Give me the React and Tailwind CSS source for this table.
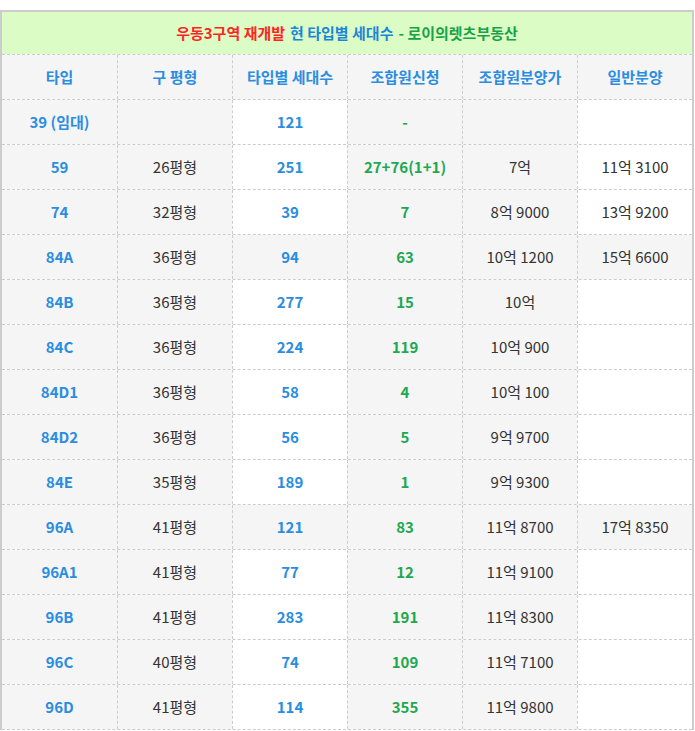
const headers = ["타입", "구 평형", "타입별 세대수", "조합원신청", "조합원분양가", "일반분양"];

const rows = [
  { type: "39 (임대)", old: "", count: "121", apply: "-", price: "", general: "" },
  { type: "59", old: "26평형", count: "251", apply: "27+76(1+1)", price: "7억", general: "11억 3100" },
  { type: "74", old: "32평형", count: "39", apply: "7", price: "8억 9000", general: "13억 9200" },
  { type: "84A", old: "36평형", count: "94", apply: "63", price: "10억 1200", general: "15억 6600", shade: true },
  { type: "84B", old: "36평형", count: "277", apply: "15", price: "10억", general: "" },
  { type: "84C", old: "36평형", count: "224", apply: "119", price: "10억 900", general: "" },
  { type: "84D1", old: "36평형", count: "58", apply: "4", price: "10억 100", general: "" },
  { type: "84D2", old: "36평형", count: "56", apply: "5", price: "9억 9700", general: "" },
  { type: "84E", old: "35평형", count: "189", apply: "1", price: "9억 9300", general: "" },
  { type: "96A", old: "41평형", count: "121", apply: "83", price: "11억 8700", general: "17억 8350", shade: true },
  { type: "96A1", old: "41평형", count: "77", apply: "12", price: "11억 9100", general: "" },
  { type: "96B", old: "41평형", count: "283", apply: "191", price: "11억 8300", general: "" },
  { type: "96C", old: "40평형", count: "74", apply: "109", price: "11억 7100", general: "" },
  { type: "96D", old: "41평형", count: "114", apply: "355", price: "11억 9800", general: "" },
];

const font = { fontFamily: '"Noto Sans CJK KR", "Noto Sans", sans-serif' };

function Cell({ children, bg, color, first, strong }) {
  return (
    <div
      className={`flex items-center justify-center h-[44px] text-[15px] ${strong ? "font-semibold" : ""} ${bg} ${color} ${
        first ? "" : "border-l border-dashed border-[#cccccc]"
      }`}
    >
      {children}
    </div>
  );
}

export default function App() {
  return (
    <div className="bg-white w-[695px] h-[731px] pt-[10px]" style={font}>
      <div className="w-[694px] border-2 border-b-0 border-[#cccccc]">
        <div className="h-[42px] bg-[#dbfdc5] flex items-center justify-center text-[15px] font-bold">
          <span className="text-[#ff2424]">우동3구역 재개발</span>
          <span className="text-[#1c86d8] ml-[5px]">현 타입별 세대수</span>
          <span className="text-[#17a245] ml-[5px]">- 로이의렛츠부동산</span>
        </div>

        <div className="grid grid-cols-6 border-t border-dashed border-[#cccccc]">
          {headers.map((h, i) => (
            <div
              key={h}
              className={`flex items-center justify-center h-[44px] bg-[#f5f5f5] text-[15px] font-bold text-[#2b8de0] ${
                i === 0 ? "" : "border-l border-dashed border-[#cccccc]"
              }`}
            >
              {h}
            </div>
          ))}
        </div>

        {rows.map((r) => {
          const white = r.shade ? "bg-[#f5f5f5]" : "bg-white";
          return (
            <div key={r.type} className="grid grid-cols-6 border-t border-dashed border-[#cccccc]">
              <Cell first strong bg="bg-[#f5f5f5]" color="text-[#2b8de0]">{r.type}</Cell>
              <Cell bg="bg-[#f5f5f5]" color="text-[#333333]">{r.old}</Cell>
              <Cell strong bg={white} color="text-[#2b8de0]">{r.count}</Cell>
              <Cell strong bg="bg-[#f5f5f5]" color="text-[#1ea84f]">{r.apply}</Cell>
              <Cell bg="bg-[#f5f5f5]" color="text-[#333333]">{r.price}</Cell>
              <Cell bg={white} color="text-[#333333]">{r.general}</Cell>
            </div>
          );
        })}
        <div className="border-t border-dashed border-[#cccccc]" />
      </div>
    </div>
  );
}
